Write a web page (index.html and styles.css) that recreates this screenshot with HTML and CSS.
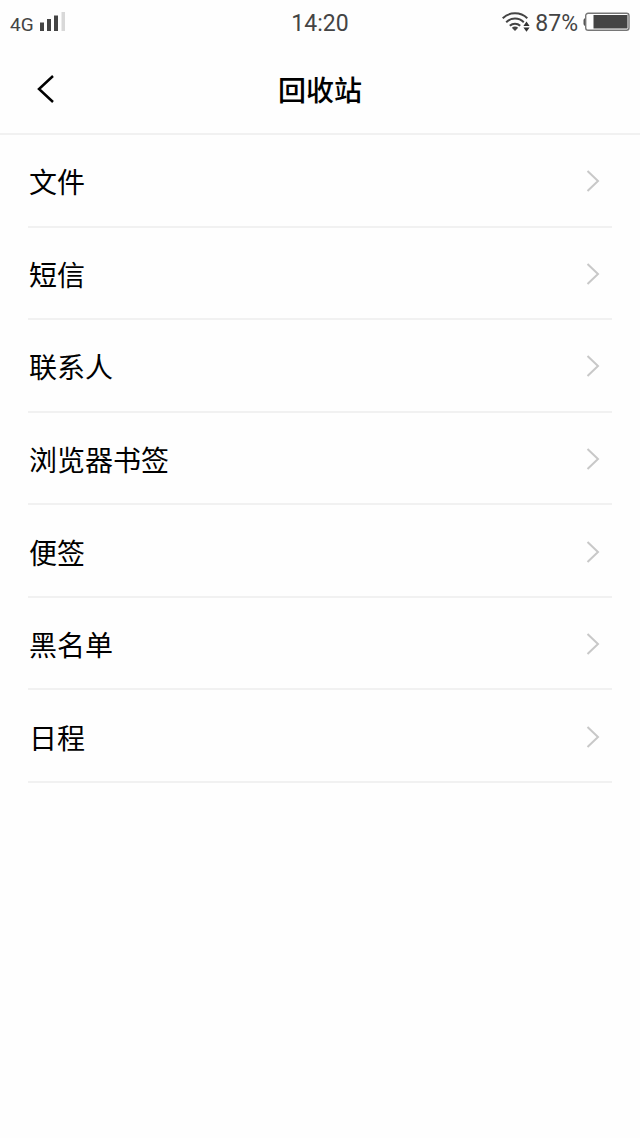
FILE: index.html
```html
<!DOCTYPE html>
<html lang="zh-CN">
<head>
<meta charset="utf-8">
<meta name="viewport" content="width=device-width, initial-scale=1">
<title>回收站</title>
<link rel="stylesheet" href="styles.css">
</head>
<body>
<svg class="defs" aria-hidden="true">
  <symbol id="chevron" viewBox="0 0 14 24"><path d="M1.500 2l10.500 10L1.500 22" fill="none" stroke="#c8c8c8" stroke-width="2"/></symbol>
</svg>
<div class="status">
  <div class="status-left">
    <span class="network">4G</span>
    <svg class="signal" width="26" height="20" viewBox="0 0 26 20" aria-hidden="true">
      <path d="M0 10.500h4V19H0zM7 7h4v12H7zM14 3.500h4V19h-4z" fill="#444"/>
      <path d="M21.500 0H25v19h-3.500z" fill="#d8d8d8"/>
    </svg>
  </div>
  <time class="time">14:20</time>
  <div class="status-right">
    <svg class="wifi" width="28" height="20" viewBox="0 0 28 20" aria-hidden="true">
      <g fill="none" stroke="#444" stroke-width="2">
        <path d="M.700 6.200C7.500-.400 18.500-.400 25.300 6.200"/>
        <path d="M4.200 10.200c5-4.900 12.600-4.900 17.600 0"/>
        <path d="M7.800 13.800c3-2.900 7.400-2.900 10.400 0"/>
      </g>
      <path d="M9.800 15.800q3.200-2.400 6.400 0L13 19z" fill="#444"/>
      <path d="M21.400 13.900L24.500 9.500l3.100 4.400zM21.400 15.400h6.200L24.500 19.800z" fill="#333"/>
    </svg>
    <span class="percent">87%</span>
    <svg class="battery" width="47" height="20" viewBox="0 0 47 20" aria-hidden="true">
      <path d="M3 6Q.500 6 .500 8.500v3q0 2.500 2.500 2.500z" fill="#555"/>
      <rect x="2.700" y="1.200" width="43.300" height="17" rx="2.500" fill="#fff" stroke="#777" stroke-width="1.400"/>
      <path d="M10.500 3H44.500v13.500h-34z" fill="#444"/>
    </svg>
  </div>
</div>
<header class="header">
  <button class="back" type="button" aria-label="返回">
    <svg width="18" height="30" viewBox="0 0 18 30" aria-hidden="true"><path d="M16 2L2 15l14 13" fill="none" stroke="#000" stroke-width="2.500"/></svg>
  </button>
  <h1 class="title">回收站</h1>
</header>
<main>
  <nav class="list">
    <a class="row" href="#files">文件<svg class="chevron" aria-hidden="true"><use href="#chevron"/></svg></a>
    <a class="row" href="#sms">短信<svg class="chevron" aria-hidden="true"><use href="#chevron"/></svg></a>
    <a class="row" href="#contacts">联系人<svg class="chevron" aria-hidden="true"><use href="#chevron"/></svg></a>
    <a class="row" href="#bookmarks">浏览器书签<svg class="chevron" aria-hidden="true"><use href="#chevron"/></svg></a>
    <a class="row" href="#notes">便签<svg class="chevron" aria-hidden="true"><use href="#chevron"/></svg></a>
    <a class="row" href="#blocklist">黑名单<svg class="chevron" aria-hidden="true"><use href="#chevron"/></svg></a>
    <a class="row" href="#calendar">日程<svg class="chevron" aria-hidden="true"><use href="#chevron"/></svg></a>
  </nav>
</main>
</body>
</html>
```
FILE: styles.css
```css
* {
  box-sizing: border-box;
}

body {
  margin: 0;
  min-height: 100vh;
  background: #fefefe;
  color: #000;
  font-family: "Noto Sans CJK SC", sans-serif;
}

.defs {
  display: none;
}

.status {
  display: grid;
  grid-template-columns: 1fr auto 1fr;
  align-items: center;
  height: 44px;
  padding: 0 10px;
  color: #444;
  font-family: Roboto, sans-serif;
  font-size: 23px;
}

.status-left,
.status-right {
  display: flex;
  align-items: center;
}

.status-left {
  gap: 6px;
}

.status-right {
  justify-content: flex-end;
  gap: 5px;
}

.network {
  padding-top: 4px;
  font-size: 19px;
}

.time,
.percent {
  padding-top: 2px;
}

.header {
  display: grid;
  grid-template-columns: 1fr auto 1fr;
  align-items: center;
  height: 91px;
  padding: 0 28px;
  border-bottom: 2px solid #f1f1f1;
}

.back {
  display: flex;
  justify-self: start;
  padding: 8px 9px;
  border: 0;
  background: none;
}

.title {
  margin: 0;
  font-size: 28px;
  font-weight: 500;
  line-height: 40px;
}

.list {
  display: grid;
  grid-auto-rows: 1fr;
  min-height: 648px;
  padding: 0 28px;
}

.row {
  display: flex;
  align-items: center;
  justify-content: space-between;
  padding: 2px 12px 0 1px;
  border-bottom: 2px solid #f1f1f1;
  color: inherit;
  font-size: 28px;
  line-height: 40px;
  text-decoration: none;
}

.chevron {
  width: 14px;
  height: 24px;
}
```
